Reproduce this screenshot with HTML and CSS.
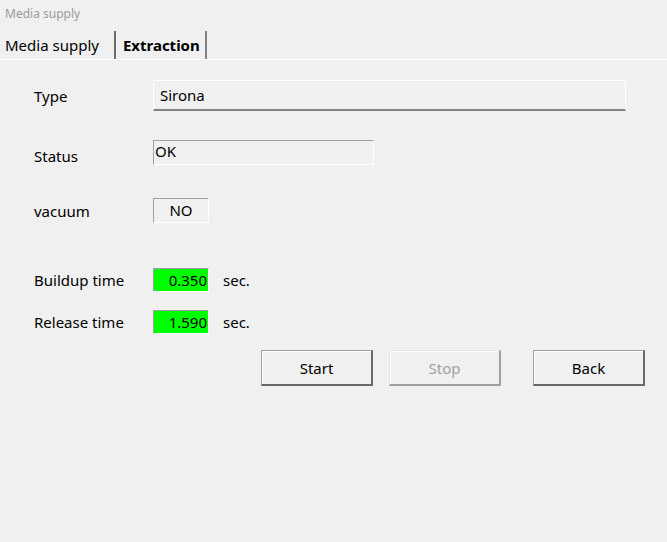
FILE: index.html
```html
<!DOCTYPE html>
<html lang="en">
<head>
  <meta charset="UTF-8">
  <title>Media supply</title>
  <link rel="stylesheet" href="styles.css">
</head>
<body>
  <div class="window">
    <div class="title">Media supply</div>

    <div class="tabs">
      <div class="tab">Media supply</div>
      <div class="tab active">Extraction</div>
    </div>

    <div class="page">
      <div class="row row-type">
        <div class="label">Type</div>
        <div class="field raised">Sirona</div>
      </div>

      <div class="row row-status">
        <div class="label label-low">Status</div>
        <div class="field sunken status">OK</div>
      </div>

      <div class="row row-vacuum">
        <div class="label">vacuum</div>
        <div class="field sunken small center">NO</div>
      </div>

      <div class="row row-buildup">
        <div class="label">Buildup time</div>
        <div class="field sunken small value">0.350</div>
        <div class="unit">sec.</div>
      </div>

      <div class="row row-release">
        <div class="label">Release time</div>
        <div class="field sunken small value">1.590</div>
        <div class="unit">sec.</div>
      </div>

      <div class="buttons">
        <button class="btn">Start</button>
        <button class="btn disabled">Stop</button>
        <button class="btn">Back</button>
      </div>
    </div>
  </div>
</body>
</html>
```

FILE: styles.css
```css
/* Base */
body {
  margin: 0;
  background: #f0f0f0;
  font-family: 'Noto Sans', 'Open Sans', sans-serif;
  color: #000;
}

.window {
  width: 667px;
  height: 542px;
  background: #f0f0f0;
}

.title {
  height: 27px;
  padding-left: 5px;
  font-size: 12px;
  line-height: 27px;
  color: #9b9b9b;
}

/* Tabs */
.tabs {
  display: flex;
  height: 28px;
  margin-top: 4px;
  border-bottom: 1px solid #ffffff;
}

.tab {
  padding: 0 14px 0 5px;
  font-size: 15px;
  line-height: 28px;
}

.tab.active {
  margin-left: 1px;
  padding: 0 5px 0 7px;
  font-weight: bold;
  border-left: 2px solid #6d6d6d;
  border-right: 2px solid #808080;
}

/* Form rows */
.page {
  padding-left: 34px;
}

.row {
  display: flex;
  align-items: center;
}

.label {
  width: 119px;
  font-size: 15px;
  line-height: 20px;
}

.label-low {
  align-self: flex-end;
  margin-bottom: -1px;
}

.row-type { margin-top: 20px; height: 31px; }
.row-status { margin-top: 29px; height: 25px; }
.row-vacuum { margin-top: 33px; height: 25px; }
.row-buildup { margin-top: 45px; height: 24px; }
.row-release { margin-top: 18px; height: 24px; }

.field {
  box-sizing: border-box;
  font-size: 15px;
}

.raised {
  width: 473px;
  height: 31px;
  padding-left: 6px;
  line-height: 28px;
  border-top: 1px solid #ffffff;
  border-left: 1px solid #ffffff;
  border-right: 1px solid #ffffff;
  border-bottom: 2px solid #828282;
}

.sunken {
  height: 25px;
  line-height: 23px;
  border-top: 1px solid #a0a0a0;
  border-left: 1px solid #a0a0a0;
  border-right: 1px solid #ffffff;
  border-bottom: 1px solid #ffffff;
}

.status {
  width: 221px;
  padding-left: 1px;
  line-height: 21px;
}

.small {
  width: 56px;
}

.center {
  text-align: center;
}

.value {
  height: 24px;
  line-height: 22px;
  padding-right: 1px;
  text-align: right;
  background: #00ff00;
}

.unit {
  margin-left: 14px;
  font-size: 15px;
}

/* Buttons */
.buttons {
  display: flex;
  justify-content: flex-end;
  gap: 16px;
  margin-top: 16px;
  padding-right: 22px;
}

.btn {
  box-sizing: border-box;
  width: 112px;
  height: 36px;
  font-family: inherit;
  font-size: 15px;
  color: #000;
  background: #f0f0f0;
  border-style: solid;
  border-width: 1px 2px 2px 1px;
  border-color: #a0a0a0 #696969 #696969 #a0a0a0;
  box-shadow: inset 1px 1px 0 #ffffff;
  padding: 0;
}

.btn.disabled {
  color: #a0a0a0;
  border-color: #e3e3e3 #a0a0a0 #a0a0a0 #e3e3e3;
  margin-right: 16px;
}
```
